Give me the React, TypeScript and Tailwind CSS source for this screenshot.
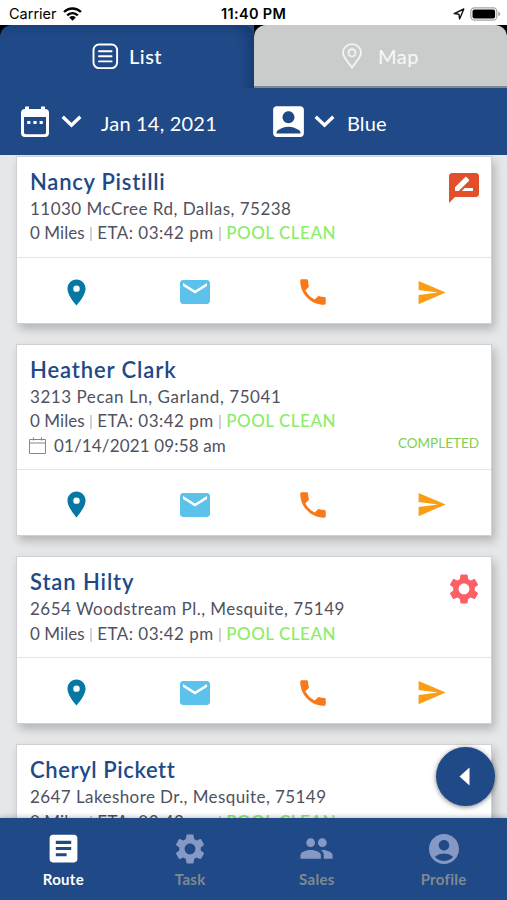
import { clsx } from "clsx";
import {
  MdAccountBox,
  MdAccountCircle,
  MdArticle,
  MdEmail,
  MdLocationOn,
  MdPeople,
  MdPhone,
  MdRateReview,
  MdSend,
  MdSettings,
} from "react-icons/md";

const stops = [
  {
    name: "Nancy Pistilli",
    nameClass: "tracking-[0.75px]",
    address: "11030 McCree Rd, Dallas, 75238",
    addressClass: "tracking-[0.48px]",
    badge: "review",
  },
  {
    name: "Heather Clark",
    nameClass: "tracking-[0.9px]",
    address: "3213 Pecan Ln, Garland, 75041",
    addressClass: "tracking-[0.55px]",
    completedAt: "01/14/2021 09:58 am",
  },
  {
    name: "Stan Hilty",
    nameClass: "tracking-[0.9px]",
    address: "2654 Woodstream Pl., Mesquite, 75149",
    addressClass: "tracking-[0.47px]",
    badge: "settings",
  },
  {
    name: "Cheryl Pickett",
    nameClass: "tracking-[0.6px]",
    address: "2647 Lakeshore Dr., Mesquite, 75149",
    addressClass: "tracking-[0.42px]",
  },
];

const tabs = [
  { icon: MdArticle, label: "Route", size: 37, active: true },
  { icon: MdSettings, label: "Task", size: 36 },
  { icon: MdPeople, label: "Sales", size: 35 },
  { icon: MdAccountCircle, label: "Profile", size: 36 },
];

function StatusBar() {
  return (
    <div className="relative flex h-[25px] shrink-0 items-center bg-white pt-[3px] text-black">
      <span className="ml-[9px] font-[Inter] text-[14.5px]">Carrier</span>
      <svg className="ml-[6px] h-[14px] w-[19px]" viewBox="0 0 18 13">
        <g fill="none" stroke="#000" strokeWidth="2.3">
          <path d="M1 4.6a11.4 11.4 0 0 1 16 0" />
          <path d="M4 7.7a7.1 7.1 0 0 1 10 0" />
        </g>
        <path d="M5.9 9.7a4.4 4.4 0 0 1 6.2 0L9 12.9z" />
      </svg>
      <span className="absolute left-[221px] font-[Inter] text-[14.5px] font-semibold tracking-[0.35px]">
        11:40 PM
      </span>
      <svg className="ml-auto h-[12px] w-[12px]" viewBox="0 0 12 12">
        <path d="M1.2 5.6 10.8 1 6.6 10.9 5.9 6.2z" fill="none" stroke="#111" strokeWidth="1.4" strokeLinejoin="round" />
      </svg>
      <svg className="mr-[6px] ml-[5px] h-[14px] w-[31px]" viewBox="0 0 31 14">
        <rect x="0.8" y="0.8" width="26" height="12.4" rx="3.6" fill="#fff" stroke="#a5a5a5" strokeWidth="1.2" />
        <rect x="2.5" y="2.5" width="22.6" height="9" rx="2" />
        <path d="M28.3 4.6q2 1 2 2.4t-2 2.4z" fill="#a5a5a5" />
      </svg>
    </div>
  );
}

function Chevron() {
  return (
    <svg className="h-[13px] w-[21px]" viewBox="0 0 21 13" fill="none" stroke="#fff" strokeWidth="3.4">
      <path d="M1.7 1.8 10.5 10.2 19.3 1.8" />
    </svg>
  );
}

function Header() {
  return (
    <header className="relative z-10 flex h-[130px] shrink-0 flex-col bg-[#204987] text-white">
      <div className="flex h-[63px] bg-black">
        <div className="w-[254px] bg-[linear-gradient(to_right,#000_50%,#204987_50%)]">
          <div className="flex h-full items-center rounded-t-[12px] bg-[#204987] pb-px pl-[92px] shadow-[inset_-9px_5px_12px_-5px_rgba(8,30,75,0.4)]">
            <svg className="h-[27px] w-[27px]" viewBox="0 0 27 27" fill="none" stroke="#fff" strokeWidth="1.9">
              <rect x="1.5" y="1.5" width="23.6" height="23.6" rx="5.5" />
              <path d="M7 8.2h12.6M7 13.3h12.6M7 18.4h12.6" strokeLinecap="round" />
            </svg>
            <span className="ml-[10px] text-[20px] font-medium tracking-[0.5px]">List</span>
          </div>
        </div>
        <div className="flex w-[253px] items-center rounded-t-[12px] border-b-2 border-[#7d8790] bg-[#c9cccb] pl-[87px]">
          <svg className="h-[26px] w-[22px]" viewBox="0 0 22 26" fill="none" stroke="#f2f3f3" strokeWidth="1.9">
            <path d="M11 24.5C7.6 19.9 2 14 2 9.7a9 8.6 0 0 1 18 0C20 14 14.4 19.9 11 24.5z" />
            <circle cx="11" cy="9.8" r="3.6" />
          </svg>
          <span className="ml-[15px] text-[20px] font-medium tracking-[0.4px] text-[#f5f6f6]">Map</span>
        </div>
      </div>
      <div className="flex h-[67px] items-center">
        <div className="flex w-[253px] items-center pl-[20px]">
          <svg className="h-[33px] w-[30px]" viewBox="0 0 30 33">
            <path
              fill="#fff"
              fillRule="evenodd"
              d="M5 1.5h4V4h12V1.5h4V4a4 4 0 0 1 4 4v20a4 4 0 0 1-4 4H5a4 4 0 0 1-4-4V8a4 4 0 0 1 4-4zM4 12v15.5A1.8 1.8 0 0 0 5.8 29.3h18.400a1.8 1.8 0 0 0 1.8-1.8V12z"
            />
            <path fill="#fff" d="M7.2 16h3.2v3H7.2zM13.4 16h3.2v3h-3.2zM19.6 16h3.2v3h-3.2z" />
          </svg>
          <div className="ml-[11px] flex">
            <Chevron />
          </div>
          <span className="ml-[19px] pt-[2px] text-[20px] tracking-[0.2px]">Jan 14, 2021</span>
        </div>
        <div className="flex flex-1 items-center pl-[15px]">
          <MdAccountBox size={41} />
          <div className="ml-[5px] flex">
            <Chevron />
          </div>
          <span className="ml-[12px] pt-[2px] text-[20px] tracking-[0.1px]">Blue</span>
        </div>
      </div>
    </header>
  );
}

function StopCard({ stop }: { stop: (typeof stops)[number] }) {
  return (
    <article className="relative mr-[15px] ml-[16px] shrink-0 border border-[#cfd1d3] bg-white shadow-[3px_5px_9px_rgba(0,0,0,0.22)]">
      <div className="border-b border-[#e2e3e4] px-[13px] pt-[10px] pb-[11px] text-[17px] leading-[24.5px] text-[#50515f]">
        <h2 className={clsx("mb-px text-[22px] leading-[29px] font-semibold text-[#204987]", stop.nameClass)}>
          {stop.name}
        </h2>
        <p className={stop.addressClass}>{stop.address}</p>
        <p className="flex whitespace-nowrap">
          <span className="tracking-[0.05px]">0 Miles</span>
          <span className="mx-[5.5px] mt-[6px] h-[14px] w-[1.5px] bg-[#d2d2d6]" />
          <span className="tracking-[0.48px]">ETA: 03:42 pm</span>
          <span className="mx-[5.5px] mt-[6px] h-[14px] w-[1.5px] bg-[#d2d2d6]" />
          <span className="font-medium tracking-[0.52px] text-[#8bed6a]">POOL CLEAN</span>
        </p>
        {stop.completedAt && (
          <div className="-mr-px flex items-center">
            <svg className="-ml-[1px] h-[17px] w-[17px]" viewBox="0 0 17 17" fill="none" stroke="#858590">
              <path d="M.5 2.5h16v14H.5zM.5 6h16M4.5.5v3M12.5.5v3" />
            </svg>
            <span className="ml-[8px] tracking-[0.15px]">{stop.completedAt}</span>
            <span className="-mt-[6px] ml-auto text-[13.5px] text-[#80cf4b]">COMPLETED</span>
          </div>
        )}
      </div>
      {stop.badge === "review" && <MdRateReview className="absolute top-[13px] right-[9px] text-[#e1502a]" size={36} />}
      {stop.badge === "settings" && <MdSettings className="absolute top-[14px] right-[9px] text-[#fb6164]" size={36} />}
      <div className="grid h-[65px] grid-cols-4 place-items-center pt-[4px]">
        <MdLocationOn className="text-[#0778a3]" size={31} />
        <MdEmail className="text-[#5cc2eb]" size={36} />
        <MdPhone className="text-[#f97919]" size={34} />
        <MdSend className="text-[#fa9f15]" size={31} />
      </div>
    </article>
  );
}

export default function App() {
  return (
    <div className="relative flex h-[900px] w-[507px] flex-col overflow-hidden bg-[#e5e7e9] font-[Lato,sans-serif]">
      <StatusBar />
      <Header />
      <main className="flex min-h-0 flex-1 flex-col gap-[20px] overflow-hidden pt-[0.5px]">
        {stops.map((stop) => (
          <StopCard key={stop.name} stop={stop} />
        ))}
      </main>

      <button className="absolute top-[747px] left-[436px] flex h-[59px] w-[59px] items-center justify-center rounded-full bg-[#204987] pr-[2px] shadow-[0_1px_5px_rgba(0,0,0,0.5)]">
        <svg className="h-[19px] w-[11px]" viewBox="0 0 11 19">
          <path d="M10.5.5v18L.5 9.5z" fill="#fff" />
        </svg>
      </button>

      <nav className="z-10 grid h-[82px] shrink-0 grid-cols-4 bg-[#204987] shadow-[0_-1px_5px_rgba(0,0,0,0.25)]">
        {tabs.map((tab) => (
          <div key={tab.label} className="flex flex-col items-center pt-[12px]">
            <div className={clsx("flex h-[37px] items-center", tab.active ? "text-white" : "text-[#8699c4]")}>
              <tab.icon size={tab.size} />
            </div>
            <span
              className={clsx(
                "mt-[2px] text-[15px] leading-[20px] font-bold tracking-[0.3px]",
                tab.active ? "text-white" : "text-[#808991]",
              )}
            >
              {tab.label}
            </span>
          </div>
        ))}
      </nav>
    </div>
  );
}
